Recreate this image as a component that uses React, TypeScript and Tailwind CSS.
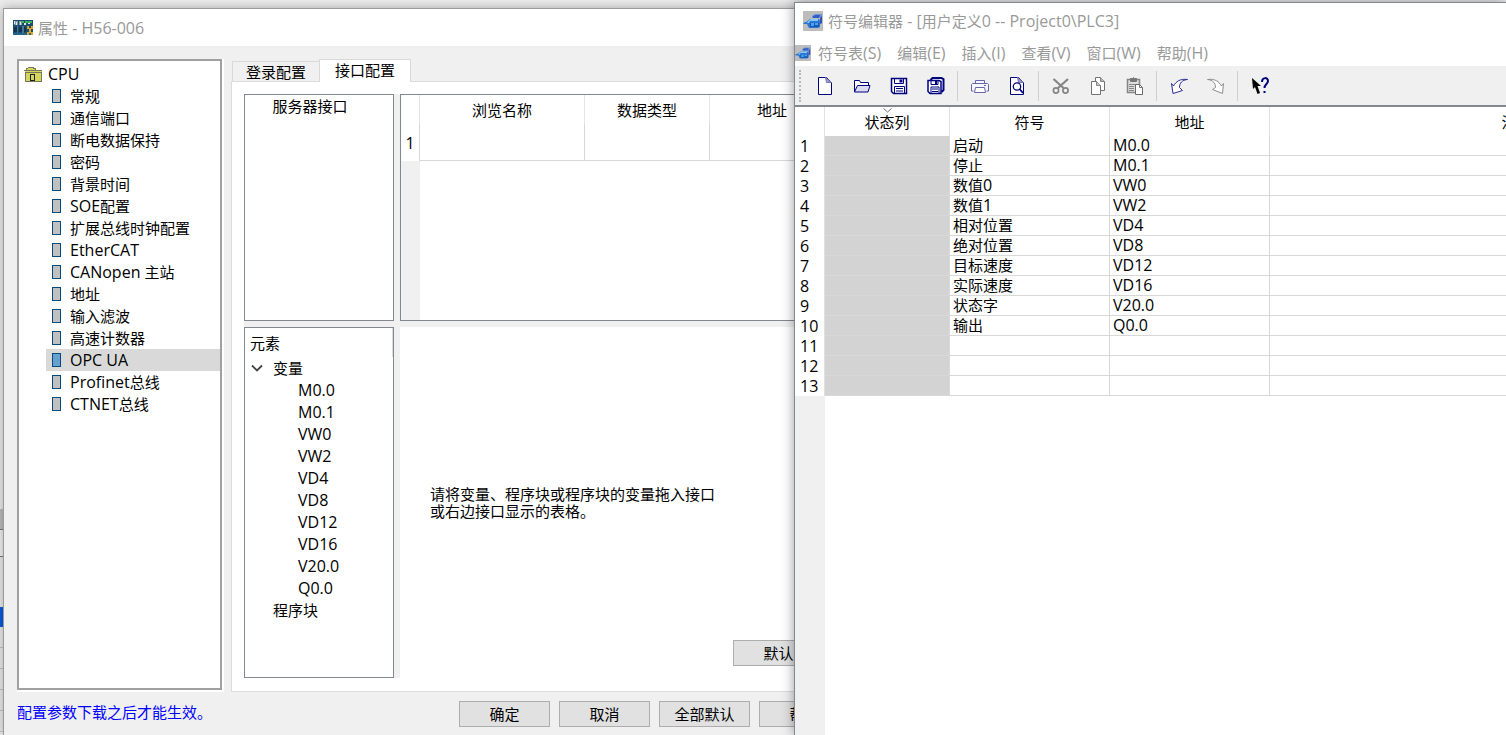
import React from "react";

const navItems = [
  "常规", "通信端口", "断电数据保持", "密码", "背景时间", "SOE配置", "扩展总线时钟配置",
  "EtherCAT", "CANopen 主站", "地址", "输入滤波", "高速计数器", "OPC UA", "Profinet总线", "CTNET总线",
];
const variables = ["M0.0", "M0.1", "VW0", "VW2", "VD4", "VD8", "VD12", "VD16", "V20.0", "Q0.0"];
const symbols = ["启动", "停止", "数值0", "数值1", "相对位置", "绝对位置", "目标速度", "实际速度", "状态字", "输出", "", "", ""];
const menus = ["符号表(S)", "编辑(E)", "插入(I)", "查看(V)", "窗口(W)", "帮助(H)"];

/* Latin runs are set one size larger than the Chinese runs beside them. */
function Mixed({ text }: { text: string }) {
  const runs = text.match(/[\x20-\x7e]+|[^\x20-\x7e]+/g) ?? [];
  return (
    <>
      {runs.map((run, i) =>
        run.charCodeAt(0) < 127 ? (
          <span key={i} className="whitespace-pre text-[16px]">{run}</span>
        ) : (
          <span key={i} className="text-[15px]">{run}</span>
        ),
      )}
    </>
  );
}

function RackIcon() {
  return (
    <svg width="20" height="15" viewBox="0 0 20 15" shapeRendering="crispEdges" className="shrink-0">
      <rect width="20" height="15" fill="#1a4f70" />
      <path d="M1 1h4v4H1zM6 1h3v4H6z" fill="#7d9aa6" />
      <path d="M1 1h1v3H1zM3 2h1v3H3zM7 2h1v3H7zM11 3h2v2h-2zM15 3h2v1h-2z" fill="#dfe8ea" />
      <path d="M8 1h3v2H8zM12 1h7v2h-7z" fill="#3fae5a" />
      <path d="M1 7h3v5H1zM6 7h3v5H6zM11 7h2v5h-2z" fill="#17344c" />
      <path d="M4 6h1v7H4zM9 6h2v7H9z" fill="#3b7d9a" />
      <path d="M0 13h20v2H0z" fill="#226488" />
      <path d="M14 6h2v2h2V6h2v3h-2v3h2v3h-2v-2h-2v2h-2v-3h2V9h-2z" fill="#dfa32a" />
    </svg>
  );
}

function SymbolIcon({ small = false }: { small?: boolean }) {
  return (
    <svg width={small ? 16 : 20} height={small ? 16 : 20} viewBox="0 0 20 20" className="shrink-0">
      <rect width="20" height="20" fill="#bdbdbd" />
      <path d="M9 5l3-2h7v9l-2 1V7H9z" fill="#6f8fd8" />
      <path d="M10 5l3-1h4l-1 3h-6z" fill="#2d5fc4" />
      <path d="M0 12l3-1 4-3h9l1 2v6l-2 1H6l-2-4H1z" fill="#2b74d2" />
      <path d="M5 10l3-2h7v2H7l-1 2H4z" fill="#86c8fb" />
      <path d="M7 12h9v4H7z" fill="#1a57b4" />
      <path d="M8 12h3v3H8zM12 12h3v2h-3z" fill="#49a4ee" />
      <path d="M17 7l2-2v7l-2 1z" fill="#3552ad" />
    </svg>
  );
}

function FolderIcon() {
  return (
    <svg width="18" height="17" viewBox="0 0 18 17" shapeRendering="crispEdges">
      <path d="M2 5V2h2V1h6v1h1v2h7v3H1V5z" fill="#d6d65c" stroke="none" />
      <path d="M2 4V2h2M4 1h5M9 1v1h2v2h7" fill="none" stroke="#77775c" />
      <path d="M0 4.5h18" stroke="#77775c" />
      <path d="M1 6.5h16v9H1z" fill="#d6d65c" stroke="#77775c" />
      <rect x="6.5" y="8.5" width="4" height="6" fill="#d6d65c" stroke="#222" />
    </svg>
  );
}

const navy = "#000080";
const page = "M2.5.5h8l5 5v12h-13z";

const icons: Record<string, React.ReactNode> = {
  "新建": <><path d={page} fill="#fff" stroke={navy} /><path d="M9.500.5l1 5h5z" fill="#9c9ccc" stroke="#7777b8" /></>,
  "打开": <><path d="M1.500 15V3.500h5l1 2h8v3" fill="#fff" stroke={navy} /><path d="M1.500 15l3-6.500H17L15 15z" fill="#dcdcf0" stroke={navy} /></>,
  "保存": <><path d="M1.500 1.500h15v15H3.500l-2-2z" fill="#fff" stroke={navy} strokeWidth="1.500" /><path d="M4.500 1.500h9v5h-9zM4.500 9.500h10v7h-10zM6 11.500h7M6 14h7" fill="none" stroke={navy} /><path d="M9.500 2.500h3v3h-3z" fill={navy} /></>,
  "全部保存": <><path d="M3.500 3l2-2h9l2 1v11l-2 2" fill="#fff" stroke={navy} strokeWidth="2" /><path d="M1 3.500h11l2 1v12H3l-2-2z" fill="#fff" stroke={navy} strokeWidth="1.500" /><path d="M4 3.500h7v4H4zM4 10h8v6.500H4zM5 12h6M5 14.500h6" fill="none" stroke={navy} /><path d="M8 4h2v3H8z" fill={navy} /></>,
  "打印": <><path d="M4.500 6V3.500h9V6M2.500 14h-2V7.500l1-1h15l1 1V14h-2" fill="#f7f7ff" stroke="#6666ae" /><path d="M4.500 10.500h9l1 5h-11z" fill="#fff" stroke="#6666ae" /><path d="M13 8.500h2" stroke="#6666ae" /></>,
  "打印预览": <><path d={page} fill="#fff" stroke={navy} /><path d="M9.500.5l1 5h5z" fill="#9c9ccc" stroke="#7777b8" /><circle cx="9" cy="9.500" r="3.700" fill="#fff" stroke={navy} strokeWidth="1.300" /><path d="M11.500 12l3.500 4" stroke={navy} strokeWidth="1.800" /></>,
  "剪切": <><path d="M1.500 2l10 9M16 2L6 11" stroke="#858585" strokeWidth="2.200" /><circle cx="4" cy="13.500" r="2.600" fill="none" stroke="#858585" strokeWidth="1.700" /><circle cx="13.500" cy="13.500" r="2.600" fill="none" stroke="#858585" strokeWidth="1.700" /></>,
  "复制": <><path d="M6.500.5h5l4 4v9h-9z" fill="#fff" stroke="#737373" /><path d="M11.500.5v4h4" fill="#bbb" stroke="#858585" /><path d="M2.500 4.500h5l4 4v9h-9z" fill="#fff" stroke="#737373" /><path d="M7.500 4.500v4h4" fill="#ccc" stroke="#858585" /></>,
  "粘贴": <><path d="M1.500 2.500h12v13h-12z" fill="#dedede" stroke="#858585" strokeWidth="1.500" /><path d="M4.500 4.500v-3h2l1-1 1 1h2v3z" fill="#777" stroke="#777" /><path d="M3 7.500h8M3 9.500h5M3 11.500h5M3 13.500h5" stroke="#858585" /><path d="M9.500 7.500h4l3 3v7h-7z" fill="#fff" stroke="#686868" /><path d="M13.500 7.500v3h3" fill="none" stroke="#777" /></>,
  "撤销": <path d="M1.500 6.500l2 2.500C6 4.500 10 1.500 17.500 2.500 12 3 9.500 6 9.500 10.500l3 3-9.500 3z" fill="#fff" stroke="#2b2b94" />,
  "重做": <path d="M16.500 6.500l-2 2.500C12 4.500 8 1.500.5 2.500 6 3 8.500 6 8.500 10.500l-3 2 10 4z" fill="#fff" stroke="#8e8e8e" />,
  "帮助": <><path d="M1 1l1 11 2-2 2.500 7 2.500-1-2.500-7H10z" fill="#000" /><path d="M11 5c0-5 6-5 6-1 0 3-3.500 3-3.500 7" fill="none" stroke={navy} strokeWidth="2" /><path d="M12.500 14h2v2h-2z" fill={navy} /></>,
};
const toolGroups = [["新建", "打开", "保存", "全部保存"], ["打印", "打印预览"], ["剪切", "复制", "粘贴"], ["撤销", "重做"], ["帮助"]];

function PushButton({ children }: { children: React.ReactNode }) {
  return (
    <button className="h-[26px] w-[91px] shrink-0 border border-[#adadad] bg-[#e1e1e1] text-[15px] leading-5">
      {children}
    </button>
  );
}

function Backdrop() {
  return (
    <div className="flex h-full w-4 flex-col bg-[#ececec]" aria-hidden="true">
      <div className="h-[509px] shrink-0" />
      <div className="h-5 shrink-0 bg-[#bdbdbd]" />
      <div className="h-7 shrink-0 border-y border-[#77797c] bg-[#f2f2f2]" />
      <div className="h-[50px] shrink-0" />
      <div className="h-5 shrink-0 bg-[#0a5be0]" />
      {[0, 1, 2, 3, 4].map((n) => (
        <div key={n} className="h-[21px] shrink-0 border-b border-[#c4c4c4]" />
      ))}
    </div>
  );
}

function InterfaceTable() {
  return (
    <div className="min-w-0 flex-1 overflow-hidden border border-[#828790] bg-white">
      <div className="flex h-full flex-col">
        <table className="w-[434px] table-fixed border-separate border-spacing-0 text-[15px]">
          <colgroup>
            <col className="w-[19px]" />
            <col className="w-[165px]" />
            <col className="w-[125px]" />
            <col className="w-[125px]" />
          </colgroup>
          <thead>
            <tr className="h-[29px]">
              <th className="border-r border-[#e5e5e5] p-0" />
              {["浏览名称", "数据类型", "地址"].map((h) => (
                <th key={h} className="border-r border-[#e5e5e5] p-0 font-normal leading-5">{h}</th>
              ))}
            </tr>
          </thead>
          <tbody>
            <tr className="h-[37px]">
              <th className="border-r border-[#d8d8d8] p-0 text-[16px] font-normal">1</th>
              <td className="border-r border-b border-[#d8d8d8] p-0" />
              <td className="border-r border-b border-[#d8d8d8] p-0" />
              <td className="border-r border-b border-[#d8d8d8] p-0" />
            </tr>
          </tbody>
        </table>
        <div className="w-[19px] flex-1 bg-[#f0f0f0]" />
      </div>
    </div>
  );
}

function PropertiesWindow() {
  return (
    <section className="absolute top-2 bottom-0 left-[3px] flex w-[860px] flex-col border-t border-l border-[#9b9b9b] bg-[#f0f0f0] shadow-[0_0_10px_rgba(0,0,0,0.3)]">
      <header className="flex h-[37px] shrink-0 items-center gap-[5px] bg-white pl-[9px] text-[#999999]">
        <RackIcon />
        <h1><Mixed text="属性 - H56-006" /></h1>
      </header>
      <div className="flex min-h-0 flex-1 gap-[7px] pt-[13px] pr-3 pl-[13px]">
        <nav className="w-[207px] shrink-0 border-r-2 border-b-2 border-white" aria-label="CPU">
          <div className="h-full border-2 border-[#a0a0a0] bg-white pt-[2px]">
            <div className="flex h-[22px] items-center gap-[6px] pl-[5px]">
              <FolderIcon />
              <span className="text-[16px]">CPU</span>
            </div>
            <ul className="pl-[27px]">
              {navItems.map((item) => (
                <li key={item}>
                  <button className={item === "OPC UA" ? "flex h-[22px] w-full items-center gap-[9px] bg-[#d9d9d9] pl-[6px] leading-5" : "flex h-[22px] w-full items-center gap-[9px] pl-[6px] leading-5"}>
                    <span className={item === "OPC UA" ? "h-[14px] w-[9px] border border-[#004b80] bg-[#66a0cc]" : "h-[14px] w-[9px] border border-[#004b80] bg-[#c0c0c0]"} />
                    <span><Mixed text={item} /></span>
                  </button>
                </li>
              ))}
            </ul>
          </div>
        </nav>
        <div className="flex min-w-0 flex-1 flex-col">
          <div className="flex h-[22px] shrink-0 items-end pl-px text-[15px]" role="tablist">
            <button role="tab" aria-selected="false" className="h-5 w-[87px] border-t border-l border-[#d9d9d9] leading-[18px]">登录配置</button>
            <button role="tab" aria-selected="true" className="z-10 -mb-px h-[23px] w-[92px] border border-b-0 border-[#d9d9d9] bg-white pb-[2px] leading-5">接口配置</button>
          </div>
          <div className="flex min-h-0 flex-1 flex-col border border-[#dcdcdc] bg-white px-3 pt-3 pb-[13px]">
            <div className="flex min-h-0 flex-1 flex-col gap-[6px] bg-[#f0f0f0]">
              <div className="flex h-[227px] shrink-0 gap-[6px]">
                <div className="w-[150px] shrink-0 border border-[#828790] bg-white pr-[18px] text-center text-[15px] leading-[22px]">服务器接口</div>
                <InterfaceTable />
              </div>
              <div className="flex min-h-0 flex-1 gap-[6px]">
                <div className="w-[150px] shrink-0 border border-[#828790] bg-white text-[15px]">
                  <div className="h-[29px] border-r border-[#dcdcdc] pt-1 pl-[5px] leading-[22px]">元素</div>
                  <div className="flex h-[22px] items-center gap-[10px] pl-[6px] leading-5">
                    <svg width="12" height="12" viewBox="0 0 12 12"><path d="M1 3.500l5 5 5-5" fill="none" stroke="#444" strokeWidth="1.800" /></svg>
                    变量
                  </div>
                  <ul className="pl-[53px] text-[16px]">
                    {variables.map((v) => <li key={v} className="h-[22px] leading-[22px]">{v}</li>)}
                  </ul>
                  <div className="h-[22px] pl-7 leading-[22px]">程序块</div>
                </div>
                <div className="flex min-w-0 flex-1 flex-col bg-white">
                  <p className="flex flex-1 items-center pt-[38px] pl-[30px] text-[15px] leading-[17px]">
                    <span>请将变量、程序块或程序块的变量拖入接口<br />或右边接口显示的表格。</span>
                  </p>
                  <div className="flex justify-end pr-[14px] pb-3">
                    <PushButton>默认</PushButton>
                  </div>
                </div>
              </div>
            </div>
          </div>
        </div>
      </div>
      <footer className="flex h-[43px] shrink-0 items-start pt-[9px] pr-[13px] pl-[13px]">
        <p className="flex-1 text-[15px] leading-[22px] text-[#0000ff]">配置参数下载之后才能生效。</p>
        <div className="flex gap-[9px]">
          {["确定", "取消", "全部默认", "帮助"].map((b) => <PushButton key={b}>{b}</PushButton>)}
        </div>
      </footer>
    </section>
  );
}

function SymbolEditor() {
  return (
    <section className="absolute top-[2px] right-0 bottom-0 left-[794px] flex flex-col overflow-hidden border-t border-l border-[#828790] bg-white shadow-[0_0_12px_rgba(0,0,0,0.4)]">
      <header className="flex h-9 shrink-0 items-center gap-[5px] pl-2 text-[#999999]">
        <SymbolIcon />
        <h2><Mixed text={"符号编辑器 - [用户定义0 -- Project0\\PLC3]"} /></h2>
      </header>
      <div className="flex h-[27px] shrink-0 items-center text-[#999999]">
        <SymbolIcon small />
        <div className="flex gap-4 pl-[7px]">
          {menus.map((m) => <button key={m} className="leading-5"><Mixed text={m} /></button>)}
        </div>
      </div>
      <div className="flex h-[39px] shrink-0 items-center border-t border-[#f0f0f0] bg-[#f0f0f0] pl-1" role="toolbar">
        <div className="mr-[5px] h-8 border-l-2 border-dotted border-[#b8b8b8]" />
        {toolGroups.map((group, i) => (
          <div key={group[0]} className={i === 0 ? "flex pr-[3px]" : "flex h-[30px] items-center border-l border-[#cfcfcf] px-[3px]"}>
            {group.map((name) => (
              <button key={name} aria-label={name} className="flex w-[37px] justify-center">
                <svg width="18" height="18" viewBox="0 0 18 18">{icons[name]}</svg>
              </button>
            ))}
          </div>
        ))}
      </div>
      <div className="flex min-h-0 flex-1 flex-col border-t-2 border-[#828790]">
        <table className="w-[969px] table-fixed border-separate border-spacing-0">
          <colgroup>
            <col className="w-[30px]" />
            <col className="w-[125px]" />
            <col className="w-[160px]" />
            <col className="w-[160px]" />
            <col className="w-[494px]" />
          </colgroup>
          <thead>
            <tr className="h-[29px] text-[15px]">
              <th className="border-r border-[#e0e0e0] p-0" />
              <th className="relative border-r border-[#e0e0e0] p-0 pt-px font-normal leading-5">
                <svg className="absolute top-px left-[58px]" width="9" height="5" viewBox="0 0 9 5"><path d="M.5.5l4 3.500 4-3.500" fill="none" stroke="#707070" /></svg>
                状态列
              </th>
              {["符号", "地址", "注释"].map((h) => (
                <th key={h} className="border-r border-[#e0e0e0] p-0 pt-px font-normal leading-5">{h}</th>
              ))}
            </tr>
          </thead>
          <tbody>
            {symbols.map((s, i) => (
              <tr key={i} className="h-5 leading-[19px]">
                <th className="border-r border-[#e0e0e0] p-0 pl-[5px] text-left text-[16px] font-normal leading-[19px]">{i + 1}</th>
                <td className="border-r border-b border-[#d8d8d8] bg-[#d3d3d3] p-0" />
                <td className="border-r border-b border-[#d8d8d8] p-0 pl-[3px] text-[15px] leading-[19px]"><Mixed text={s} /></td>
                <td className="border-r border-b border-[#d8d8d8] p-0 pl-[3px] text-[16px] leading-[19px]">{variables[i]}</td>
                <td className="border-r border-b border-[#d8d8d8] p-0" />
              </tr>
            ))}
          </tbody>
        </table>
        <div className="w-[30px] flex-1 bg-[#f0f0f0]" />
      </div>
    </section>
  );
}

export default function App() {
  return (
    <main className="relative h-screen overflow-hidden bg-[#ececec] text-black [font-family:'Open_Sans','Noto_Sans_CJK_SC',sans-serif]">
      <Backdrop />
      <PropertiesWindow />
      <SymbolEditor />
    </main>
  );
}
